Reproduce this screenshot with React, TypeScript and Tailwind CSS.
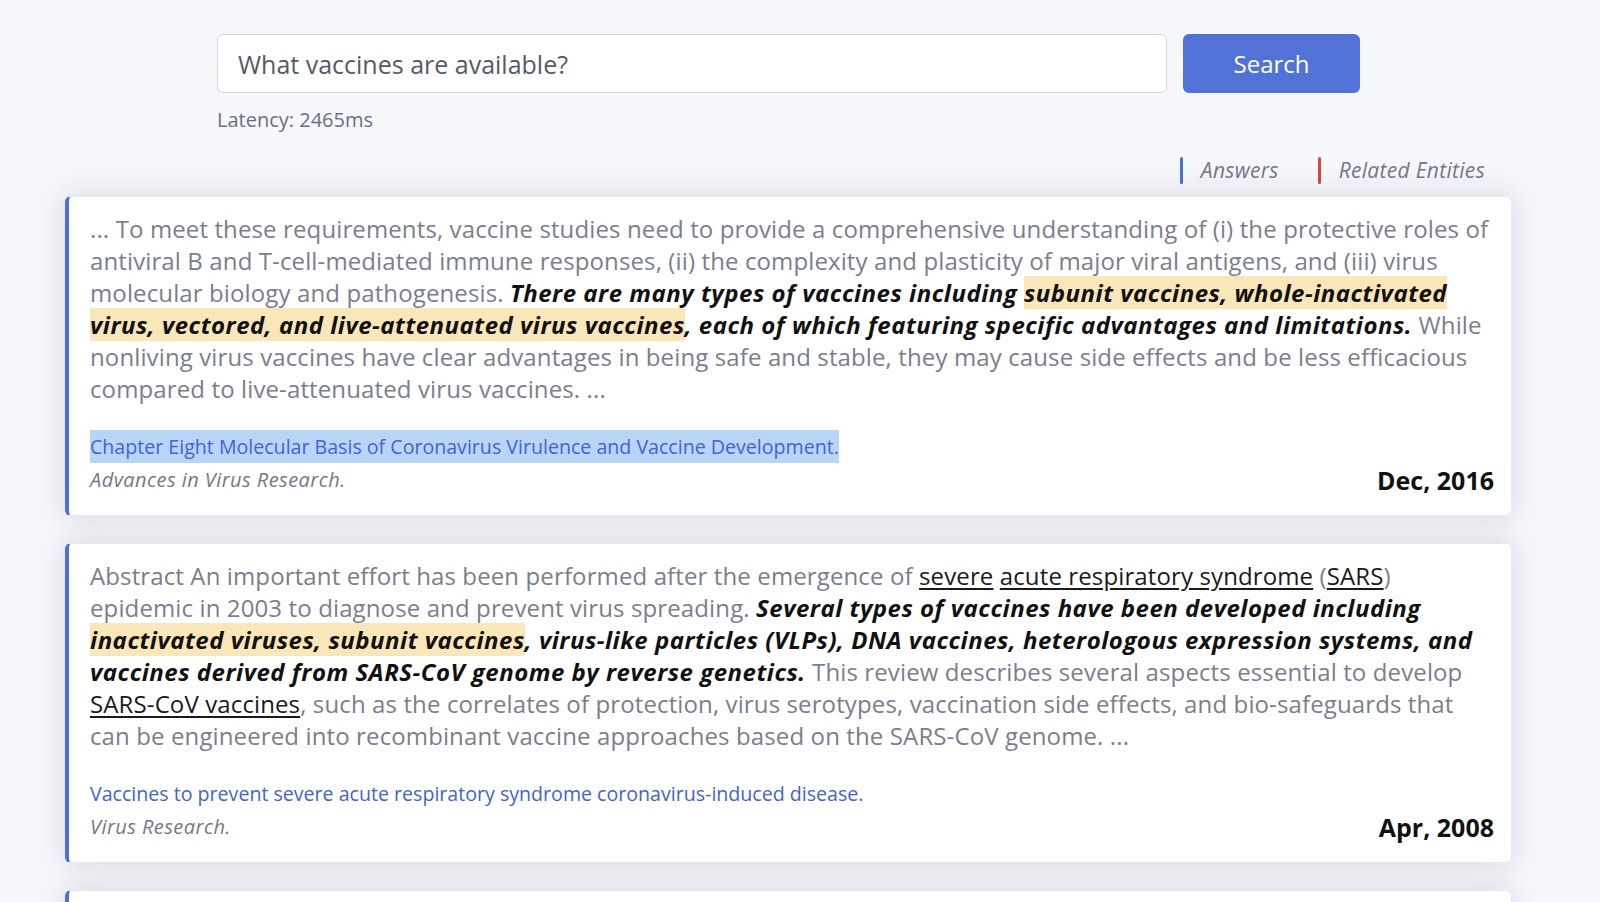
import type { ReactNode } from "react";

// answer cards for the query page
type Result = {
  body: ReactNode;
  title: string;
  journal: string;
  date: string;
  selected?: boolean;
};

function B({ children }: { children: ReactNode }) {
  return <span className="font-bold italic text-[#111] tracking-[0.5px]">{children}</span>;
}
function HL({ children }: { children: ReactNode }) {
  return <span className="font-bold italic text-[#111] tracking-[0.5px] bg-[#f9e6b9]">{children}</span>;
}
function U({ children }: { children: ReactNode }) {
  return <span className="underline underline-offset-[3px] text-[#1a1a1a]">{children}</span>;
}

const RESULTS: Result[] = [
  {
    body: (
      <>
        ... To meet these requirements, vaccine studies need to provide a comprehensive understanding of (i) the
        protective roles of antiviral B and T-cell-mediated immune responses, (ii) the complexity and plasticity of
        major viral antigens, and (iii) virus molecular biology and pathogenesis.{" "}
        <B>There are many types of vaccines including </B>
        <HL>subunit vaccines, whole-inactivated virus, vectored, and live-attenuated virus vaccines</HL>
        <B>, each of which featuring specific advantages and limitations.</B> While nonliving virus vaccines have
        clear advantages in being safe and stable, they may cause side effects and be less efficacious compared to
        live-attenuated virus vaccines. ...
      </>
    ),
    title: "Chapter Eight Molecular Basis of Coronavirus Virulence and Vaccine Development.",
    journal: "Advances in Virus Research.",
    date: "Dec, 2016",
    selected: true,
  },
  {
    body: (
      <>
        Abstract An important effort has been performed after the emergence of <U>severe</U>{" "}
        <U>acute respiratory syndrome</U> (<U>SARS</U>) epidemic in 2003 to diagnose and prevent virus spreading.{" "}
        <B>Several types of vaccines have been developed including </B>
        <HL>inactivated viruses, subunit vaccines</HL>
        <B>
          , virus-like particles (VLPs), DNA vaccines, heterologous expression systems, and vaccines derived from
          SARS-CoV genome by reverse genetics.
        </B>{" "}
        This review describes several aspects essential to develop <U>SARS-CoV vaccines</U>, such as the correlates
        of protection, virus serotypes, vaccination side effects, and bio-safeguards that can be engineered into
        recombinant vaccine approaches based on the SARS-CoV genome. ...
      </>
    ),
    title: "Vaccines to prevent severe acute respiratory syndrome coronavirus-induced disease.",
    journal: "Virus Research.",
    date: "Apr, 2008",
  },
  {
    body: <>...</>,
    title: "",
    journal: "",
    date: "",
  },
];

export default function App() {
  return (
    <div
      className="h-screen bg-[#f6f7fb] overflow-hidden"
      style={{ fontFamily: "'Open Sans', Lato, sans-serif" }}
    >
      {/* search bar */}
      <div className="pt-[34px] pl-[217px] flex gap-4">
        <input
          className="w-[950px] h-[59px] rounded-md border border-[#d3d6e2] bg-white px-5 text-[25px] text-[#555a68] outline-none"
          defaultValue="What vaccines are available?"
          aria-label="Search"
        />
        <button className="w-[177px] h-[59px] rounded-md bg-[#5173d8] text-white text-[24px]">Search</button>
      </div>
      <p className="pl-[217px] mt-[14px] text-[20px] text-[#6b7080] leading-[26px]">Latency: 2465ms</p>

      {/* tabs */}
      <div className="flex justify-end pr-[115px] mt-[22px] gap-[39px] text-[21px] italic text-[#747888] tracking-[0.3px]">
        <div className="flex items-center gap-[18px]">
          <span className="w-[3px] h-[27px] bg-[#4d6fd8] rounded-sm" />
          <span>Answers</span>
        </div>
        <div className="flex items-center gap-[18px]">
          <span className="w-[3px] h-[27px] bg-[#d4483a] rounded-sm" />
          <span>Related Entities</span>
        </div>
      </div>

      {/* results */}
      <div className="ml-[65px] w-[1447px] mt-[9px] flex flex-col gap-[27px]">
        {RESULTS.map((r, i) => (
          <div
            key={i}
            className="bg-white rounded-md border border-[#e6e8f0] border-l-4 border-l-[#4d6fd8] shadow-[0_0_30px_rgba(30,35,70,0.15)] pl-[21px] pr-[17px] pt-[16px] pb-[18px]"
          >
            <p className="text-[24px] leading-[32px] text-[#7a7e8d] tracking-[0.12px]">{r.body}</p>
            <div className="mt-[25px] text-[19.6px] leading-[33px]">
              <span className={"inline-block text-[#3f63d6] " + (r.selected ? "bg-[#b9d5f6]" : "")}>{r.title}</span>
            </div>
            <div className="flex justify-between items-center leading-[34px]">
              <span className="text-[20px] italic text-[#747888] tracking-[0.45px]">{r.journal}</span>
              <span className="text-[25px] font-bold text-[#111]">{r.date}</span>
            </div>
          </div>
        ))}
      </div>
    </div>
  );
}
